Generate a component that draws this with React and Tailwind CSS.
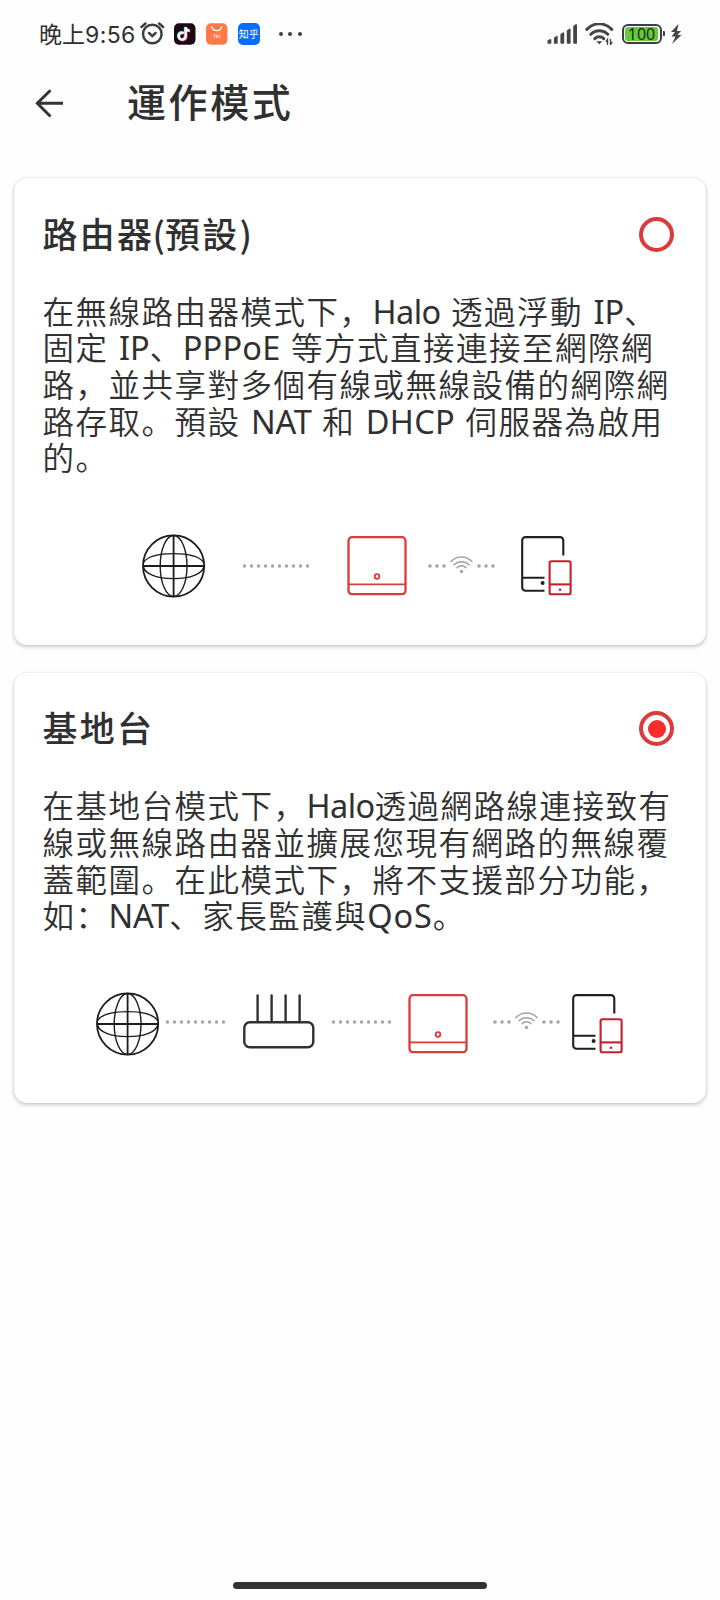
import React from "react";

const modes = [
  {
    id: "router",
    title: (
      <>
        路由器<span className="-ml-[1.5px] tracking-normal">(</span>預設
        <span className="tracking-normal">)</span>
      </>
    ),
    lines: [
      ["在無線路由器模式下，", "Halo", " 透過浮動 ", "IP", "、"],
      ["固定 ", "IP", "、", "PPPoE", " 等方式直接連接至網際網"],
      ["路，並共享對多個有線或無線設備的網際網"],
      ["路存取。預設 ", "NAT", " 和 ", "DHCP", " 伺服器為啟用"],
      ["的。"],
    ],
  },
  {
    id: "ap",
    title: "基地台",
    lines: [
      ["在基地台模式下，", "Halo", "透過網路線連接致有"],
      ["線或無線路由器並擴展您現有網路的無線覆"],
      ["蓋範圍。在此模式下，將不支援部分功能，"],
      ["如：", "NAT", "、家長監護與", "QoS", "。"],
    ],
  },
];

const Globe = () => (
  <svg className="shrink-0" width="64" height="64" viewBox="0 0 64 64" fill="none" stroke="#1c1c1c">
    <circle cx="31.6" cy="32" r="30.6" strokeWidth="1.8" />
    <ellipse cx="31.6" cy="32" rx="13.4" ry="30.5" strokeWidth="1.4" />
    <path d="M1.3 28.5C5.3 22.8 16.8 19.6 31.6 19.6S57.8 22.8 61.8 28.5M1.3 32.5C2.8 40 14.8 44.6 31.6 44.6S60.3 40 62 32.5" strokeWidth="1.4" />
    <path d="M1 32h61.2M31.6 1.5v61" strokeWidth="1.8" />
  </svg>
);

const Dots = ({ count, className }) => (
  <svg className={`shrink-0 ${className}`} width={count * 7 - 1} height="6" viewBox={`0 0 ${count * 7 - 1} 6`} fill="#a3a3a3">
    {Array.from({ length: count }, (_, i) => (
      <circle key={i} cx={2.5 + i * 7} cy="3" r="1.7" />
    ))}
  </svg>
);

const HaloBox = () => (
  <svg className="shrink-0" width="64" height="64" viewBox="0 0 64 64" fill="none" stroke="#dc3b3b" strokeWidth="2.3">
    <rect x="3.5" y="3.2" width="57" height="57" rx="3.5" />
    <path d="M3.5 50.4h57" strokeWidth="1.8" />
    <circle cx="32" cy="42.5" r="2.3" strokeWidth="1.8" />
  </svg>
);

const RouterIcon = () => (
  <svg className="shrink-0" width="74" height="64" viewBox="0 0 74 64" fill="none" stroke="#303030">
    <path d="M15.6 3.5v26.5M29.6 3.5v26.5M43.6 3.5v26.5M57.6 3.5v26.5" strokeWidth="2.4" strokeLinecap="round" />
    <rect x="2.3" y="30.2" width="69" height="25" rx="5.5" strokeWidth="2.4" />
  </svg>
);

const WifiLink = ({ className }) => (
  <svg className={`shrink-0 ${className}`} width="70" height="24" viewBox="0 0 70 24" fill="none">
    <g fill="#a3a3a3">
      <circle cx="3" cy="12" r="1.8" />
      <circle cx="10" cy="12" r="1.8" />
      <circle cx="17" cy="12" r="1.8" />
      <circle cx="34.5" cy="17.4" r="1.7" />
      <circle cx="52" cy="12" r="1.8" />
      <circle cx="59" cy="12" r="1.8" />
      <circle cx="66" cy="12" r="1.8" />
    </g>
    <g stroke="#a3a3a3" strokeWidth="1.5" strokeLinecap="round">
      <path d="M24 7.6C29.7 1.6 39.3 1.6 45 7.6" />
      <path d="M27 10.8C31 6.6 38 6.6 42 10.8" />
      <path d="M30 13.8C32.3 11.2 36.7 11.2 39 13.8" />
    </g>
  </svg>
);

const Devices = () => (
  <svg className="shrink-0" width="54" height="64" viewBox="0 0 54 64" fill="none" strokeWidth="2.1">
    <g stroke="#1f1f1f">
      <path d="M43.3 21.4V6.4a3.3 3.3 0 0 0-3.3-3.3H5.5A3.3 3.3 0 0 0 2.2 6.4V53.4a3.3 3.3 0 0 0 3.3 3.3H24.5M2.2 43.7h22.3" />
      <circle cx="22.6" cy="49.1" r="2" fill="#1f1f1f" stroke="none" />
    </g>
    <g stroke="#c4202c">
      <rect x="29.6" y="27.2" width="21" height="33" rx="1.8" />
      <path d="M29.6 50.4h21" />
      <circle cx="40.1" cy="55.8" r="1.3" fill="#c4202c" stroke="none" />
    </g>
  </svg>
);

const RouterDiagram = () => (
  <div className="flex items-center h-16 pl-[128px]">
    <Globe />
    <Dots count={10} className="ml-9" />
    <div className="ml-[33.5px]">
      <HaloBox />
    </div>
    <WifiLink className="ml-[18.5px]" />
    <div className="ml-[22.5px]">
      <Devices />
    </div>
  </div>
);

const ApDiagram = () => (
  <div className="flex items-center h-16 pl-[82px]">
    <Globe />
    <Dots count={9} className="ml-[5px] mb-[4px]" />
    <div className="ml-[15px]">
      <RouterIcon />
    </div>
    <Dots count={9} className="ml-[15px] mb-[4px]" />
    <div className="ml-[13px]">
      <HaloBox />
    </div>
    <WifiLink className="ml-[22px] mb-[4px]" />
    <div className="ml-[9px]">
      <Devices />
    </div>
  </div>
);

const Radio = ({ checked }) => (
  <span className="flex items-center justify-center w-[35px] h-[35px] rounded-full border-4 border-[#df3a3a]">
    {checked && <span className="w-[18px] h-[18px] rounded-full bg-[#fb2c2c]"></span>}
  </span>
);

// tracking for the latin words inside the descriptions
const latinTracking = {
  Halo: "tracking-[-0.6px]",
  IP: "tracking-normal",
  NAT: "tracking-[-0.2px]",
  QoS: "tracking-[0.9px]",
  PPPoE: "tracking-[0.2px]",
  DHCP: "tracking-[0.3px]",
};

const ModeCard = ({ mode, checked, children }) => (
  <section className="rounded-[13px] bg-white pt-[38px] pb-[46.5px] shadow-[0_2px_4px_rgba(0,0,0,0.2),0_0_2px_rgba(0,0,0,0.14)]">
    <div className="flex items-center justify-between h-9 pl-[28.5px] pr-8">
      <h2 className="mb-[3px] text-[35px] leading-9 font-medium tracking-[2.2px] whitespace-nowrap">
        {mode.title}
      </h2>
      <Radio checked={checked} />
    </div>
    <div className="mt-[39.5px] mb-[59.5px] pl-[28.5px] text-[31.5px] font-[350] tracking-[1.5px] [word-spacing:2px]">
      {mode.lines.map((line, i) => (
        <p key={i} className="h-[36.6px] leading-[36.6px] whitespace-pre">
          {line.map((part, j) =>
            latinTracking[part] ? (
              <span key={j} className={`font-['Noto_Sans'] text-[32.5px] leading-none font-normal ${latinTracking[part]}`}>
                {part}
              </span>
            ) : (
              <span key={j}>{part}</span>
            )
          )}
        </p>
      ))}
    </div>
    {children}
  </section>
);

const StatusBar = () => (
  <div className="flex items-center h-[68px] pl-[39px]">
    <span className="w-[101px] text-[23px] leading-6 whitespace-nowrap">
      晚上<span className="font-['Inter'] tracking-[0.4px]">9:56</span>
    </span>
    {/* alarm */}
    <svg width="25" height="24" viewBox="0 0 25 24" fill="none" stroke="#3f3f3f" strokeWidth="2.5" strokeLinecap="round">
      <circle cx="12.3" cy="12" r="9.3" />
      <path d="M9 11l3.3 3 3.3-3M1.5 5l4-3.5M23.1 5l-4-3.5" />
    </svg>
    <div className="flex items-center gap-[10.5px] ml-[9px]">
      <svg width="21.5" height="22" viewBox="0 0 22 22">
        <rect width="22" height="22" rx="5" fill="#1d0715" />
        <g fill="none" strokeWidth="2.4">
          <path d="M10 10a3.6 3.6 0 1 0 2 3.2V4.2c.3 2 1.800 3.300 4 3.500" stroke="#25e5e8" transform="translate(-.7 -.5)" />
          <path d="M10 10a3.6 3.6 0 1 0 2 3.2V4.2c.3 2 1.800 3.300 4 3.500" stroke="#f0385b" transform="translate(.7 .6)" />
          <path d="M10 10a3.6 3.6 0 1 0 2 3.2V4.2c.3 2 1.800 3.300 4 3.500" stroke="#fff" />
        </g>
      </svg>
      <svg width="21.5" height="22" viewBox="0 0 22 22">
        <rect width="22" height="22" rx="5" fill="#ff7a48" />
        <path d="M6 3.5c1 5.5 9 5.5 10 0" fill="none" stroke="#fff" strokeWidth="1.3" strokeLinecap="round" />
        <path d="M8.5 15v-3h2.2v3M12 12v3M13.6 12v3" fill="none" stroke="#ffe3d6" />
      </svg>
      <span className="flex items-center justify-center w-[21.5px] h-[22px] rounded-[5px] bg-[#0a6cff] text-white text-[10px] leading-none whitespace-nowrap">
        知乎
      </span>
    </div>
    <div className="flex gap-[5.5px] ml-[19px]">
      <span className="w-1 h-1 rounded-full bg-[#3f3f3f]"></span>
      <span className="w-1 h-1 rounded-full bg-[#3f3f3f]"></span>
      <span className="w-1 h-1 rounded-full bg-[#3f3f3f]"></span>
    </div>
    {/* signal */}
    <svg className="ml-auto" width="31" height="22" viewBox="0 0 31 22" fill="#454548" stroke="#454548" strokeWidth="1.6" strokeLinejoin="round">
      <path d="M1.3 20v-2l2.200-1.200V20zM7.700 20v-4.800l2.200-1.500V20zM14.200 20v-8.300l2.200-1.500V20zM20.600 20V7.800l2.200-1.500V20zM27 20V3.500l2.200-1.500V20z" />
    </svg>
    {/* wifi */}
    <svg className="ml-[7px]" width="30" height="22" viewBox="0 0 30 22" fill="none" stroke="#454548" strokeWidth="3" strokeLinecap="round">
      <path d="M1.8 6.4C9-1 19.5-1 26.7 6.4M5.8 11.3c4.8-4.9 12.2-4.9 17 0M9.8 15.6c2.5-2.5 6.5-2.5 9 0" />
      <path d="M11.2 18.2h6.2l-3.1 3z" fill="#454548" stroke="none" />
      <path d="M22.5 21.3v-4.8l-1.3 1.8M25.5 16.5v4.8l1.5-1.8" strokeWidth="1.4" />
    </svg>
    {/* battery */}
    <div className="flex items-center ml-[7px] mb-px">
      <span className="flex items-center justify-center w-10 h-5 rounded-[6px] border-2 border-[#3d3d45]">
        <span className="flex items-center justify-center w-[33px] h-3.5 rounded-[3px] bg-[#66c939] font-['Noto_Sans'] text-[16px] leading-none text-[#16300c]">
          100
        </span>
      </span>
      <span className="w-[2.5px] h-[5px] ml-[1px] rounded-r-[1px] bg-[#3d3d45]"></span>
    </div>
    <svg className="ml-[5px] mr-[38px]" width="12" height="22" viewBox="0 0 12 22" fill="#454548">
      <path d="M8.5 1L1 9h4L1.5 13.5h4L2 21l9.5-9h-4L11 8H7z" />
    </svg>
  </div>
);

const TopBar = () => (
  <header className="flex items-center h-[70px] pl-[35px]">
    <svg width="29" height="29" viewBox="0 0 29 29" fill="none" stroke="#333" strokeWidth="2.9">
      <path d="M15.5 1.3L2.3 14.3l13.2 13.2M2.3 14.3H28" />
    </svg>
    <h1 className="ml-[63px] mb-[6px] text-[39px] leading-[44px] font-medium tracking-[2.6px]">運作模式</h1>
  </header>
);

const App = () => {
  return (
    <div className="flex flex-col w-[720px] h-[1600px] overflow-hidden bg-[#fefefe] text-[#303030] font-['Noto_Sans_CJK_SC',sans-serif]">
      <StatusBar />
      <TopBar />
      <main className="flex flex-col gap-[28px] px-3.5 pt-[40.4px]">
        <ModeCard mode={modes[0]} checked={false}>
          <RouterDiagram />
        </ModeCard>
        <ModeCard mode={modes[1]} checked={true}>
          <ApDiagram />
        </ModeCard>
      </main>
      <div className="w-[254px] h-[7px] mt-auto mb-[11px] mx-auto rounded-full bg-[#333]"></div>
    </div>
  );
};

export default App;
